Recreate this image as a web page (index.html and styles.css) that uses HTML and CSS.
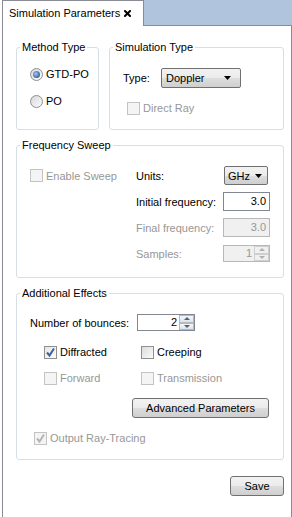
FILE: index.html
```html
<!DOCTYPE html>
<html>
<head>
<meta charset="utf-8">
<link rel="stylesheet" href="styles.css">
</head>
<body>
<div class="tabbar">
  <div class="tab">
    <span class="tabtitle">Simulation Parameters</span>
    <svg class="close" width="7" height="7" viewBox="0 0 7 7"><path d="M1 1L6 6M6 1L1 6" stroke="#000" stroke-width="2" stroke-linecap="square"/></svg>
  </div>
  <div class="tabfill"></div>
</div>
<div class="pane">
  <div class="toprow">
    <fieldset class="group method">
      <legend>Method Type</legend>
      <div class="gbody methodbody">
        <label class="opt"><span class="radio checked"></span>GTD-PO</label>
        <label class="opt"><span class="radio"></span>PO</label>
      </div>
    </fieldset>
    <fieldset class="group simtype">
      <legend>Simulation Type</legend>
      <div class="gbody simbody">
        <div class="typerow">
          <span class="typelbl">Type:</span>
          <div class="combo doppler"><span>Doppler</span><svg width="7" height="4" viewBox="0 0 7 4"><path d="M0 0H7L3.5 4Z" fill="#000"/></svg></div>
        </div>
        <label class="opt disabled direct"><span class="check"></span>Direct Ray</label>
      </div>
    </fieldset>
  </div>

  <fieldset class="group freq">
    <legend>Frequency Sweep</legend>
    <div class="gbody freqgrid">
      <label class="opt disabled enable"><span class="check"></span>Enable Sweep</label>
      <span class="lbl r1">Units:</span>
      <div class="combo ghz r1"><span>GHz</span><svg width="7" height="4" viewBox="0 0 7 4"><path d="M0 0H7L3.5 4Z" fill="#000"/></svg></div>
      <span class="lbl r2">Initial frequency:</span>
      <div class="field r2">3.0</div>
      <span class="lbl r3 dis">Final frequency:</span>
      <div class="field r3 off">3.0</div>
      <span class="lbl r4 dis">Samples:</span>
      <div class="spin r4 off"><span class="val">1</span><span class="spinbtns"><span class="sb"><i class="up"></i></span><span class="sb"><i class="down"></i></span></span></div>
    </div>
  </fieldset>

  <fieldset class="group effects">
    <legend>Additional Effects</legend>
    <div class="gbody effbody">
      <div class="bounces">
        <span class="blbl">Number of bounces:</span>
        <div class="spin bspin"><span class="val">2</span><span class="spinbtns"><span class="sb"><i class="up"></i></span><span class="sb"><i class="down"></i></span></span></div>
      </div>
      <div class="checkrow first">
        <label class="opt c1"><span class="check on"><svg width="11" height="11" viewBox="0 0 11 11"><path d="M2 5.5L4.5 8.5L9 1.5" fill="none" stroke="#3f5f9f" stroke-width="2"/></svg></span>Diffracted</label>
        <label class="opt"><span class="check"></span>Creeping</label>
      </div>
      <div class="checkrow second">
        <label class="opt disabled c1"><span class="check"></span>Forward</label>
        <label class="opt disabled"><span class="check"></span>Transmission</label>
      </div>
      <div class="advrow"><button class="btn adv">Advanced Parameters</button></div>
      <label class="opt disabled output"><span class="check"><svg width="11" height="11" viewBox="0 0 11 11"><path d="M2 5.5L4.5 8.5L9 1.5" fill="none" stroke="#b4b4b4" stroke-width="2"/></svg></span>Output Ray-Tracing</label>
    </div>
  </fieldset>

  <div class="saverow"><button class="btn save">Save</button></div>
</div>
</body>
</html>
```
FILE: styles.css
```css
* { box-sizing: border-box; }
html, body { margin: 0; padding: 0; }
body {
  width: 292px;
  height: 517px;
  overflow: hidden;
  background: #fff;
  font-family: "Liberation Sans", Arial, sans-serif;
  font-size: 11px;
  color: #000;
}

.tabbar { display: flex; height: 26px; padding-left: 2px; }
.tab {
  width: 142px;
  height: 26px;
  border: 1px solid #898c95;
  border-bottom: none;
  background: #fff;
  display: flex;
  align-items: center;
  padding: 0 12px 1px 6px;
}
.tabtitle { flex: 1; }
.close { display: block; }
.tabfill { flex: 1; background: #b0c4de; border-bottom: 1px solid #898c95; }

.pane {
  margin-left: 2px;
  width: 290px;
  height: 491px;
  border-left: 1px solid #898c95;
  border-right: 1px solid #898c95;
  padding: 15px 7px 0 13px;
}

.group {
  margin: 0;
  padding: 0;
  border: 1px solid #d5dfe5;
  border-radius: 3px;
  min-width: 0;
}
.group legend { margin-left: 3px; padding: 0 2px; line-height: 13px; white-space: nowrap; }

.toprow { display: flex; gap: 10px; height: 89px; }
.method { width: 83px; }
.methodbody { padding: 12px 0 0 13px; display: flex; flex-direction: column; gap: 11px; }
.simtype { width: 175px; }
.simbody { padding: 14px 0 0 13px; }

.opt { display: flex; align-items: center; gap: 3px; height: 16px; white-space: nowrap; }
.opt.disabled { color: #979797; }

.radio {
  width: 13px; height: 13px;
  border-radius: 50%;
  border: 1px solid #8e8f8f;
  background: linear-gradient(135deg, #d8d8d8, #fbfbfb);
  display: flex; align-items: center; justify-content: center;
  flex: none;
}
.radio.checked::after {
  content: "";
  width: 7px; height: 7px;
  border-radius: 50%;
  background: radial-gradient(circle at 40% 40%, #a9c6ee 0%, #4d79b8 55%, #20406f 100%);
}

.check {
  width: 13px; height: 13px;
  border: 1px solid #8e8f8f;
  background: linear-gradient(135deg, #dcdcdc, #fbfbfb);
  display: flex; align-items: center; justify-content: center;
  flex: none;
}
.check svg { display: block; }
.check.on { background: linear-gradient(135deg, #e6e6e6, #fcfcfc); }
.disabled .check { border-color: #c3c3c3; background: #f4f4f4; }

.typerow { display: flex; align-items: center; height: 20px; }
.typelbl { width: 38px; }
.combo {
  display: flex; align-items: center; justify-content: space-between;
  border: 1px solid #707070;
  border-radius: 2px;
  background: linear-gradient(#f2f2f2 0%, #ebebeb 50%, #dddddd 51%, #cfcfcf 100%);
}
.combo svg { display: block; }
.doppler { width: 80px; height: 20px; padding: 0 9px 0 4px; }
.direct { margin-top: 13px; height: 14px; padding-left: 4px; }

.freq { margin-top: 9px; }
.freqgrid {
  padding: 14px 13px 14px 13px;
  display: grid;
  grid-template-columns: 106px 87px 47px;
  grid-template-rows: repeat(4, 19px);
  row-gap: 7px;
  align-items: center;
}
.enable { grid-column: 1; grid-row: 1; }
.lbl { grid-column: 2; white-space: nowrap; }
.r1 { grid-row: 1; }
.r2 { grid-row: 2; }
.r3 { grid-row: 3; }
.r4 { grid-row: 4; }
.lbl.dis { color: #979797; }
.ghz { grid-column: 3; width: 44px; height: 19px; margin-left: 1px; padding: 0 5px 0 3px; }
.field {
  grid-column: 3;
  height: 19px;
  border: 1px solid #828790;
  background: #fff;
  text-align: right;
  padding-right: 3px;
  line-height: 17px;
}
.field.off { border-color: #b8b8b8; background: #f0f0f0; color: #979797; }

.spin {
  display: flex;
  border: 1px solid #828790;
  background: #fff;
}
.spin .val { flex: 1; text-align: right; padding-right: 2px; line-height: 15px; }
.spin.r4 { grid-column: 3; height: 17px; }
.spin.off { border-color: #b8b8b8; background: #f0f0f0; color: #979797; }
.spinbtns { width: 15px; display: flex; flex-direction: column; }
.sb {
  flex: 1;
  border: 1px solid #b3b9c3;
  background: linear-gradient(#f6f7f9, #dde3ea);
  display: flex; align-items: center; justify-content: center;
}
.up, .down { width: 0; height: 0; border-left: 3px solid transparent; border-right: 3px solid transparent; }
.up { border-bottom: 3px solid #4d6185; }
.down { border-top: 3px solid #4d6185; }
.off .sb { border-color: #cfcfcf; background: #f0f0f0; }
.off .up { border-bottom-color: #b0b0b0; }
.off .down { border-top-color: #b0b0b0; }

.effects { margin-top: 9px; }
.effbody { padding: 14px 0 14px 13px; }
.bounces { display: flex; align-items: center; height: 17px; }
.blbl { width: 107px; white-space: nowrap; }
.bspin { width: 58px; height: 17px; }
.checkrow { display: flex; padding-left: 14px; }
.checkrow .opt { height: 14px; }
.checkrow.first { margin-top: 14px; }
.checkrow.second { margin-top: 12px; }
.c1 { width: 97px; }
.advrow { margin-top: 13px; padding-left: 102px; }
.btn {
  font-family: inherit;
  font-size: 11px;
  color: #000;
  border: 1px solid #707070;
  border-radius: 3px;
  background: linear-gradient(#f2f2f2 0%, #ebebeb 50%, #dddddd 51%, #cfcfcf 100%);
  padding: 0;
  margin: 0;
  display: block;
}
.adv { width: 137px; height: 20px; }
.output { margin-top: 13px; height: 14px; padding-left: 4px; }

.saverow { margin-top: 16px; display: flex; justify-content: flex-end; }
.save { width: 54px; height: 20px; }
```
